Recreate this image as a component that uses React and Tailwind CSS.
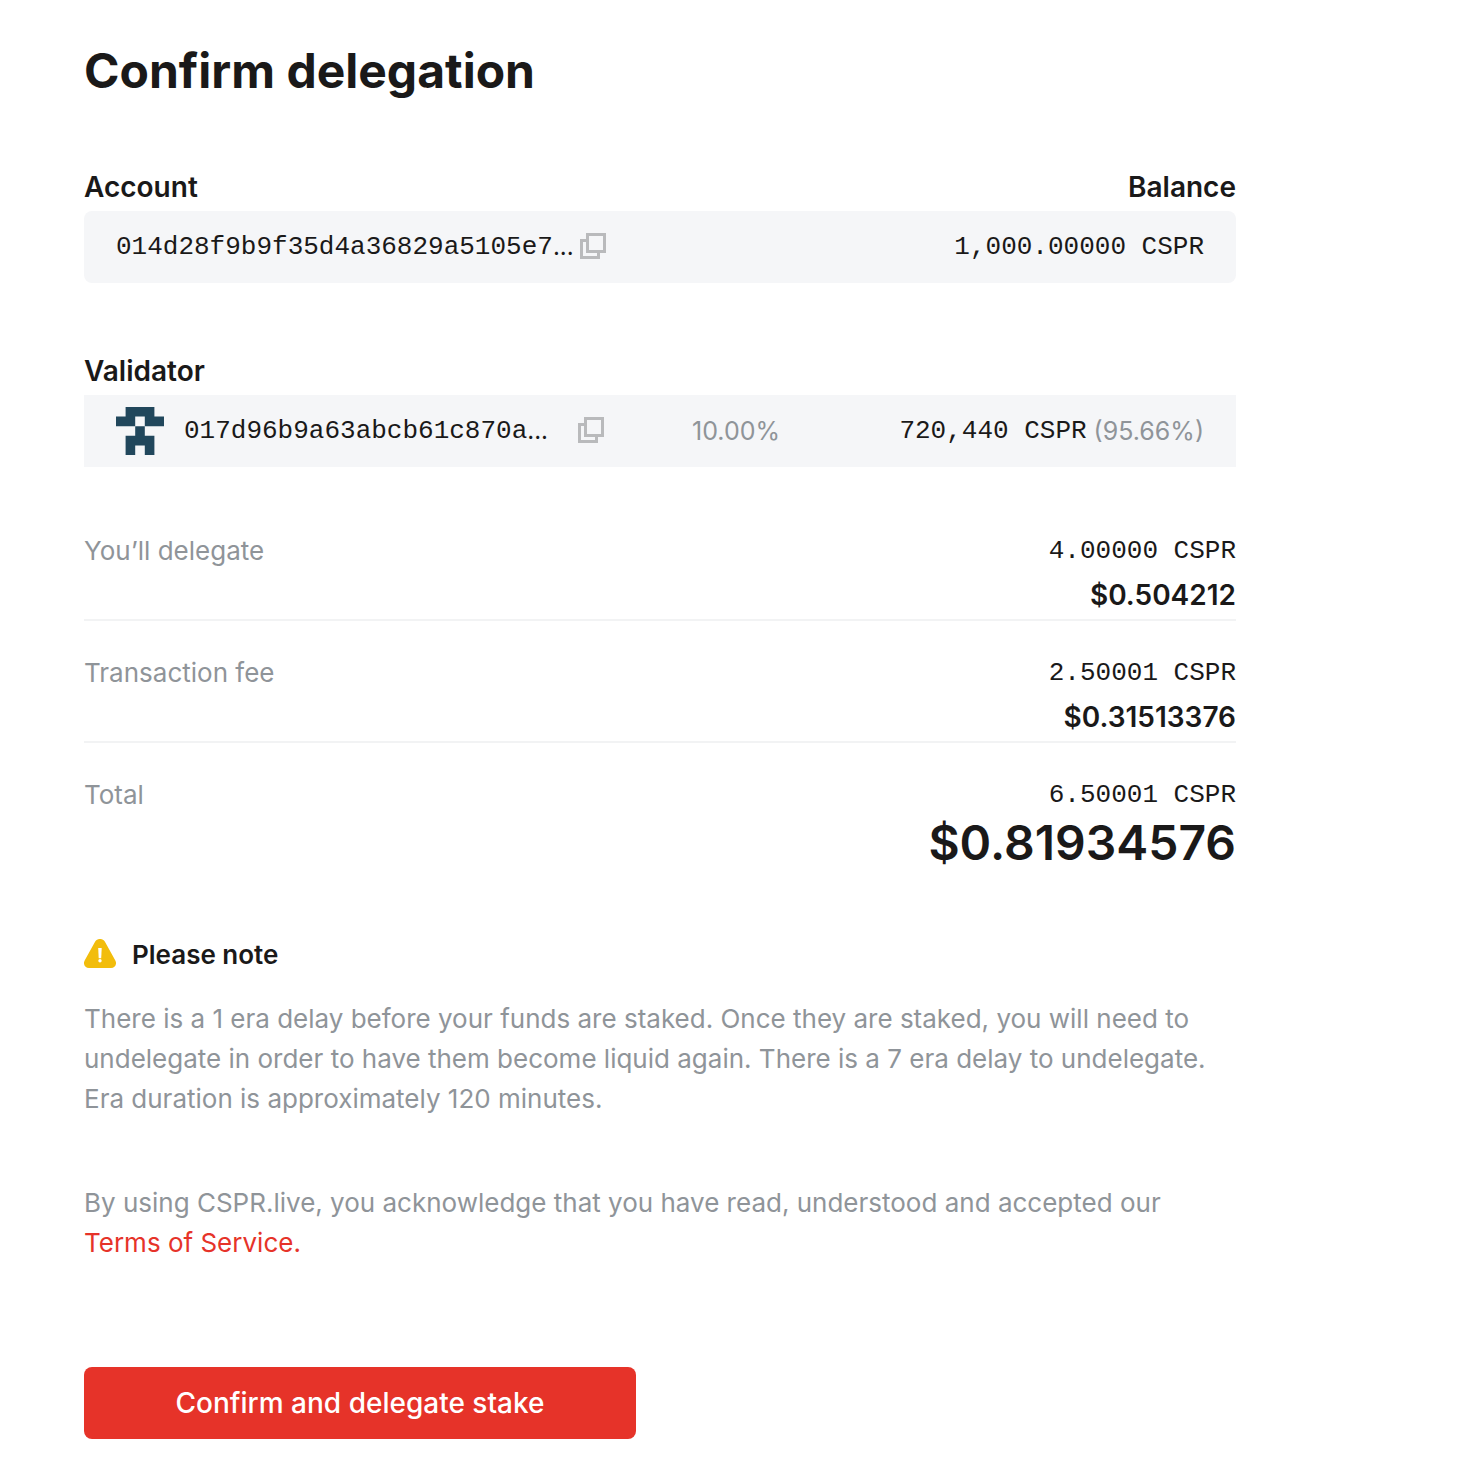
import React from "react";

function CopyButton({ label }) {
  return (
    <button type="button" aria-label={label} className="mb-0.5 block shrink-0">
      <svg width="26" height="26" viewBox="0 0 26 26" fill="none" stroke="#b9babc" strokeWidth="3" aria-hidden="true">
        <path d="M7.5 1.5h17v17h-17z" />
        <path d="M7 7.5H1.5v17h17V19" />
      </svg>
    </button>
  );
}

function Identicon() {
  return (
    <svg width="48" height="48" viewBox="0 0 5 5" fill="#21475c" aria-hidden="true" className="shrink-0">
      <path d="M1 0h3v1h1v1H3V1H2v1H0V1h1z" />
      <path d="M2 2h1v1h1v2H3V4H2v1H1V3h1z" />
    </svg>
  );
}

function WarningIcon() {
  return (
    <svg width="32" height="32" viewBox="0 0 32 32" aria-hidden="true" className="shrink-0">
      <path
        d="M11.2 2.6C13.2-.9 18.8-.9 20.8 2.6L31.2 21.2C33.4 25.1 31 29 27 29H5C1 29-1.4 25.1.8 21.2z"
        fill="#f2bd0c"
      />
      <path d="M14.2 9h3.5l-.5 10.2h-2.5z" fill="#fff" />
      <circle cx="16" cy="21.8" r="1.7" fill="#fff" />
    </svg>
  );
}

function Mono({ children, className }) {
  return <span className={`font-['Liberation_Mono',monospace] ${className ?? ""}`}>{children}</span>;
}

function AccountKey({ value }) {
  return (
    <span className="flex">
      <Mono>{value}</Mono>
      <span className="text-2xl leading-10">...</span>
    </span>
  );
}

function Amount({ label, cspr, children }) {
  return (
    <div className="flex justify-between border-b-2 border-[#f2f3f4] pb-1 last:border-0 last:pb-0">
      <dt className="text-[#8f9499]">{label}</dt>
      <dd className="flex flex-col items-end">
        <Mono>{cspr}</Mono>
        {children}
      </dd>
    </div>
  );
}

export default function App() {
  return (
    <main className="mr-[222px] ml-[84px] pt-[39px] pb-[30px] font-['Inter',sans-serif] text-[26px] leading-10 text-[#1a1919]">
      <h1 className="text-5xl leading-16 font-bold">Confirm delegation</h1>

      <section className="mt-16">
        <div className="flex justify-between text-[28px] leading-10 font-semibold">
          <h2>Account</h2>
          <span>Balance</span>
        </div>
        <div className="mt-1 flex h-18 items-center rounded-lg bg-[#f5f6f8] px-8">
          <AccountKey value="014d28f9b9f35d4a36829a5105e7" />
          <span className="ml-1.5">
            <CopyButton label="Copy account key" />
          </span>
          <Mono className="ml-auto">1,000.00000 CSPR</Mono>
        </div>
      </section>

      <section className="mt-17">
        <h2 className="text-[28px] leading-10 font-semibold">Validator</h2>
        <div className="mt-1 flex h-18 items-center bg-[#f5f6f8] px-8">
          <Identicon />
          <span className="ml-5">
            <AccountKey value="017d96b9a63abcb61c870a" />
          </span>
          <span className="ml-[30px]">
            <CopyButton label="Copy validator key" />
          </span>
          <span className="ml-[88px] text-[25px] text-[#8f9499]">10.00%</span>
          <span className="ml-auto flex gap-[7px]">
            <Mono>720,440 CSPR</Mono>
            <span className="text-[25px] text-[#8f9499]">(95.66%)</span>
          </span>
        </div>
      </section>

      <dl className="mt-16 flex flex-col gap-8">
        <Amount label="You’ll delegate" cspr="4.00000 CSPR">
          <span className="mt-1 text-[28px] leading-10 font-semibold">$0.504212</span>
        </Amount>
        <Amount label="Transaction fee" cspr="2.50001 CSPR">
          <span className="mt-1 text-[28px] leading-10 font-semibold">$0.31513376</span>
        </Amount>
        <Amount label="Total" cspr="6.50001 CSPR">
          <span className="text-5xl leading-14 font-semibold">$0.81934576</span>
        </Amount>
      </dl>

      <section className="mt-16">
        <div className="flex items-center gap-4">
          <WarningIcon />
          <h2 className="font-semibold">Please note</h2>
        </div>
        <p className="mt-6 text-[#8f9499]">
          There is a 1 era delay before your funds are staked. Once they are staked, you will need to undelegate in
          order to have them become liquid again. There is a 7 era delay to undelegate. Era duration is approximately
          120 minutes.
        </p>
        <p className="mt-16 text-[#8f9499]">
          By using CSPR.live, you acknowledge that you have read, understood and accepted our{" "}
          <a href="#terms" className="text-[#e63329]">
            Terms of Service.
          </a>
        </p>
      </section>

      <button
        type="button"
        className="mt-26 block h-18 w-full max-w-[552px] rounded-lg bg-[#e63329] text-[28px] font-medium text-white"
      >
        Confirm and delegate stake
      </button>
    </main>
  );
}
